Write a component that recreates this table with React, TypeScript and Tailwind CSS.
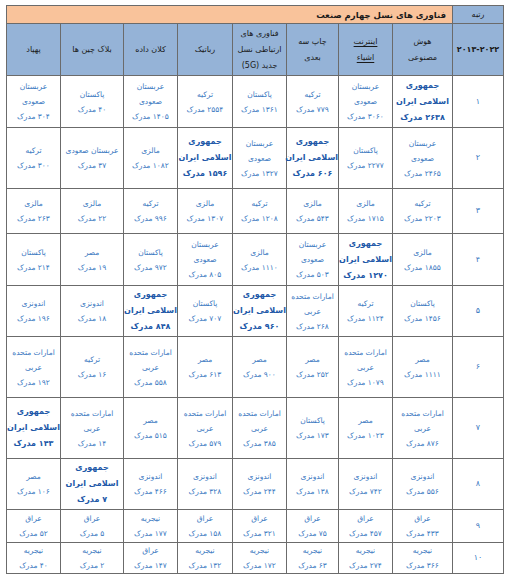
type Cell = { lines: string[]; ir?: boolean };

const IR = "ir";
const SA = "sa";
const AE = "ae";

const cell = (c: string, n: string, oneLine = false): Cell => {
  const count = `${n} مدرک`;
  if (c === IR) return { lines: ["جمهوری", "اسلامی ایران", count], ir: true };
  if (c === SA) return { lines: oneLine ? ["عربستان صعودی", count] : ["عربستان", "صعودی", count] };
  if (c === AE) return { lines: ["امارات متحده", "عربی", count] };
  return { lines: [c, count] };
};

const columns = [
  { title: ["هوش", "مصنوعی"], w: "w-[60px]" },
  { title: ["اینترنت", "اشیاء"], w: "w-[54px]", underline: true },
  { title: ["چاپ سه", "بعدی"], w: "w-[52px]" },
  { title: ["فناوری های", "ارتباطی نسل", "جدید (5G)"], w: "w-[54px]" },
  { title: ["رباتیک"], w: "w-[55px]" },
  { title: ["کلان داده"], w: "w-[54px]" },
  { title: ["بلاک چین ها"], w: "w-[63px]" },
  { title: ["پهپاد"], w: "w-[54px]" },
];

const rows: { rank: string; h: string; cells: Cell[] }[] = [
  {
    rank: "۱",
    h: "h-[52px]",
    cells: [
      cell(IR, "۲۶۳۸"),
      cell(SA, "۳۰۶۰"),
      cell("ترکیه", "۷۷۹"),
      cell("پاکستان", "۱۳۶۱"),
      cell("ترکیه", "۲۵۵۴"),
      cell(SA, "۱۴۰۵"),
      cell("پاکستان", "۴۰"),
      cell(SA, "۳۰۴"),
    ],
  },
  {
    rank: "۲",
    h: "h-[61px]",
    cells: [
      cell(SA, "۲۴۶۵"),
      cell("پاکستان", "۲۲۷۷"),
      cell(IR, "۶۰۶"),
      cell(SA, "۱۳۲۷"),
      cell(IR, "۱۵۹۶"),
      cell("مالزی", "۱۰۸۲"),
      cell(SA, "۳۷", true),
      cell("ترکیه", "۳۰۰"),
    ],
  },
  {
    rank: "۳",
    h: "h-[45px]",
    cells: [
      cell("ترکیه", "۲۲۰۳"),
      cell("مالزی", "۱۷۱۵"),
      cell("مالزی", "۵۴۳"),
      cell("ترکیه", "۱۲۰۸"),
      cell("مالزی", "۱۳۰۷"),
      cell("ترکیه", "۹۹۶"),
      cell("مالزی", "۲۲"),
      cell("مالزی", "۲۶۳"),
    ],
  },
  {
    rank: "۴",
    h: "h-[52px]",
    cells: [
      cell("مالزی", "۱۸۵۵"),
      cell(IR, "۱۲۷۰"),
      cell(SA, "۵۰۳"),
      cell("مالزی", "۱۱۱۰"),
      cell(SA, "۸۰۵"),
      cell("پاکستان", "۹۷۲"),
      cell("مصر", "۱۹"),
      cell("پاکستان", "۲۱۴"),
    ],
  },
  {
    rank: "۵",
    h: "h-[51px]",
    cells: [
      cell("پاکستان", "۱۴۵۶"),
      cell("ترکیه", "۱۱۲۴"),
      cell(AE, "۲۶۸"),
      cell(IR, "۹۶۰"),
      cell("پاکستان", "۷۰۷"),
      cell(IR, "۸۴۸"),
      cell("اندونزی", "۱۸"),
      cell("اندونزی", "۱۹۶"),
    ],
  },
  {
    rank: "۶",
    h: "h-[61px]",
    cells: [
      cell("مصر", "۱۱۱۱"),
      cell(AE, "۱۰۷۹"),
      cell("مصر", "۲۵۲"),
      cell("مصر", "۹۰۰"),
      cell("مصر", "۶۱۳"),
      cell(AE, "۵۵۸"),
      cell("ترکیه", "۱۶"),
      cell(AE, "۱۹۲"),
    ],
  },
  {
    rank: "۷",
    h: "h-[61px]",
    cells: [
      cell(AE, "۸۷۶"),
      cell("مصر", "۱۰۲۳"),
      cell("پاکستان", "۱۷۳"),
      cell(AE, "۳۸۵"),
      cell(AE, "۵۷۹"),
      cell("مصر", "۵۱۵"),
      cell(AE, "۱۴"),
      cell(IR, "۱۴۳"),
    ],
  },
  {
    rank: "۸",
    h: "h-[51px]",
    cells: [
      cell("اندونزی", "۵۵۶"),
      cell("اندونزی", "۷۴۲"),
      cell("اندونزی", "۱۳۸"),
      cell("اندونزی", "۲۴۴"),
      cell("اندونزی", "۳۲۸"),
      cell("اندونزی", "۴۶۶"),
      cell(IR, "۷"),
      cell("مصر", "۱۰۶"),
    ],
  },
  {
    rank: "۹",
    h: "h-[33px]",
    cells: [
      cell("عراق", "۴۳۳"),
      cell("عراق", "۴۵۷"),
      cell("عراق", "۷۵"),
      cell("عراق", "۳۲۱"),
      cell("عراق", "۱۵۸"),
      cell("نیجریه", "۱۷۷"),
      cell("عراق", "۵"),
      cell("عراق", "۵۲"),
    ],
  },
  {
    rank: "۱۰",
    h: "h-[31px]",
    cells: [
      cell("نیجریه", "۳۶۶"),
      cell("نیجریه", "۲۷۴"),
      cell("نیجریه", "۶۳"),
      cell("نیجریه", "۱۷۲"),
      cell("نیجریه", "۱۳۲"),
      cell("عراق", "۱۴۷"),
      cell("نیجریه", "۲"),
      cell("نیجریه", "۴۰"),
    ],
  },
];

export default function App() {
  return (
    <div className="w-[515px] h-[581px] overflow-hidden bg-white pt-[5px] pl-[6px] font-['DejaVu_Sans',sans-serif]">
      <table dir="rtl" className="table-fixed border-collapse w-[497px] text-center">
        <colgroup>
          <col className="w-[51px]" />
          {columns.map((col, i) => (
            <col key={i} className={col.w} />
          ))}
        </colgroup>
        <thead>
          <tr className="h-[18px]">
            <th className="bg-[#95b3d7] border border-[#6b6b6b] p-0 text-[8px] leading-[16px] font-normal text-[#1a1a1a]">
              رتبه
            </th>
            <th
              colSpan={8}
              className="bg-[#f9c39b] border border-[#6b6b6b] p-0 pr-[6px] text-[8.5px] leading-[16px] font-bold text-[#1a1a1a] text-right"
            >
              فناوری های نسل چهارم صنعت
            </th>
          </tr>
          <tr className="h-[52px]">
            <th className="bg-[#95b3d7] border border-[#6b6b6b] p-0 text-[8px] font-bold text-[#1a1a1a] whitespace-nowrap">
              ۲۰۱۳-۲۰۲۲
            </th>
            {columns.map((col, i) => (
              <th
                key={i}
                className="bg-[#95b3d7] border border-[#6b6b6b] p-0 text-[8px] leading-[16px] font-normal text-[#1a1a1a]"
              >
                {col.title.map((t, j) => (
                  <div key={j} className={col.underline ? "whitespace-nowrap underline underline-offset-2" : "whitespace-nowrap"}>
                    {t}
                  </div>
                ))}
              </th>
            ))}
          </tr>
        </thead>
        <tbody>
          {rows.map((row, r) => (
            <tr key={r} className={row.h}>
              <td className="border border-[#6b6b6b] p-0 text-[8px] text-[#3a78bf]">{row.rank}</td>
              {row.cells.map((c, i) => (
                <td
                  key={i}
                  className={
                    c.ir
                      ? "border border-[#6b6b6b] p-0 text-[8px] leading-[16px] font-bold text-[#2158a8]"
                      : "border border-[#6b6b6b] p-0 text-[7.5px] leading-[15px] text-[#3a78bf]"
                  }
                >
                  {c.lines.map((l, j) => (
                    <div key={j} className="whitespace-nowrap">
                      {l}
                    </div>
                  ))}
                </td>
              ))}
            </tr>
          ))}
        </tbody>
      </table>
    </div>
  );
}
